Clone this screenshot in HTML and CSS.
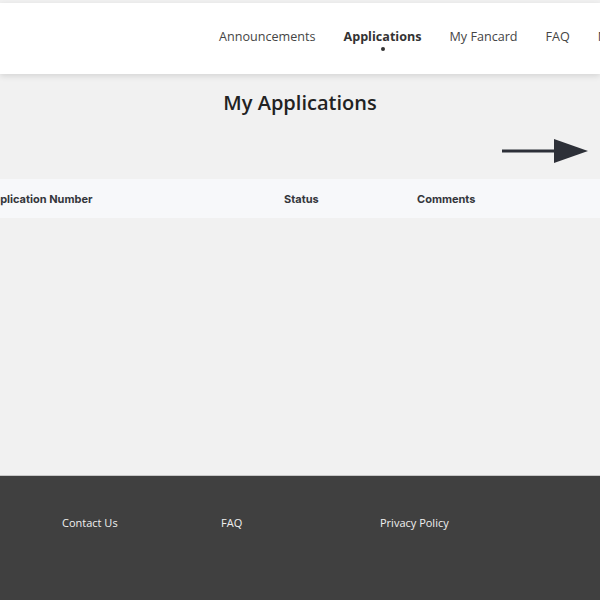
FILE: index.html
```html
<!DOCTYPE html>
<html lang="en">
<head>
<meta charset="utf-8">
<title>My Applications</title>
<link rel="stylesheet" href="styles.css">
</head>
<body>
<div class="page">
  <header class="header">
    <nav class="nav">
      <a class="nav-item">Announcements</a>
      <a class="nav-item active">Applications</a>
      <a class="nav-item">My Fancard</a>
      <a class="nav-item">FAQ</a>
      <a class="nav-item">My Account</a>
    </nav>
  </header>
  <main class="main">
    <h1 class="title">My Applications</h1>
    <div class="arrow-row">
      <svg class="arrow" width="88" height="26" viewBox="0 0 88 26">
        <rect x="0" y="11.5" width="56" height="3" fill="#2d3038"/>
        <polygon points="52,1 86,13 52,25" fill="#2d3038"/>
      </svg>
    </div>
    <div class="table-head">
      <div class="col col-num">Application Number</div>
      <div class="col col-status">Status</div>
      <div class="col col-comments">Comments</div>
    </div>
  </main>
  <footer class="footer">
    <a class="foot-link">Contact Us</a>
    <a class="foot-link">FAQ</a>
    <a class="foot-link">Privacy Policy</a>
  </footer>
</div>
</body>
</html>
```
FILE: styles.css
```css
html, body {
  margin: 0;
  padding: 0;
  width: 600px;
  height: 600px;
  overflow: hidden;
  background: #f1f1f1;
}
.page {
  display: flex;
  flex-direction: column;
  height: 600px;
  font-family: "Open Sans", "Liberation Sans", sans-serif;
}
.header {
  margin-top: 3px;
  height: 71px;
  background: #ffffff;
  box-shadow: 0 2px 6px rgba(0,0,0,0.12);
  display: flex;
  align-items: center;
  overflow: hidden;
  position: relative;
  z-index: 1;
}
.nav {
  display: flex;
  gap: 28px;
  padding-left: 219px;
  white-space: nowrap;
}
.nav-item {
  font-size: 12.6px;
  color: #454545;
  position: relative;
  line-height: 18px;
  margin-top: -4px;
}
.nav-item.active {
  font-weight: 700;
  color: #333;
}
.nav-item.active::after {
  content: "";
  position: absolute;
  left: 50%;
  top: 19px;
  width: 4px;
  height: 4px;
  margin-left: -2px;
  border-radius: 50%;
  background: #333;
}
.main {
  flex: 1;
  display: flex;
  flex-direction: column;
}
.title {
  margin: 15px 0 0;
  text-align: center;
  font-size: 20px;
  font-weight: 600;
  color: #222;
  line-height: 28px;
}
.arrow-row {
  display: flex;
  justify-content: flex-end;
  padding-right: 10px;
  margin-top: 21px;
  height: 41px;
}
.arrow {
  display: block;
  margin-right: 0;
}
.table-head {
  margin-top: 0;
  height: 39px;
  background: #f7f8fa;
  display: flex;
  align-items: center;
  font-family: Inter, "Liberation Sans", sans-serif;
  font-weight: 700;
  font-size: 11px;
  color: #34363b;
}
.col-num {
  margin-left: -15px;
  width: 299px;
}
.col-status {
  width: 133px;
}
.footer {
  height: 125px;
  background: #404040;
  border-top: 1px solid #c8c8c8;
  display: flex;
  padding-left: 62px;
  padding-top: 38px;
  box-sizing: border-box;
}
.foot-link {
  width: 159px;
  font-size: 11px;
  color: #f0f0f0;
  line-height: 18px;
}
```
